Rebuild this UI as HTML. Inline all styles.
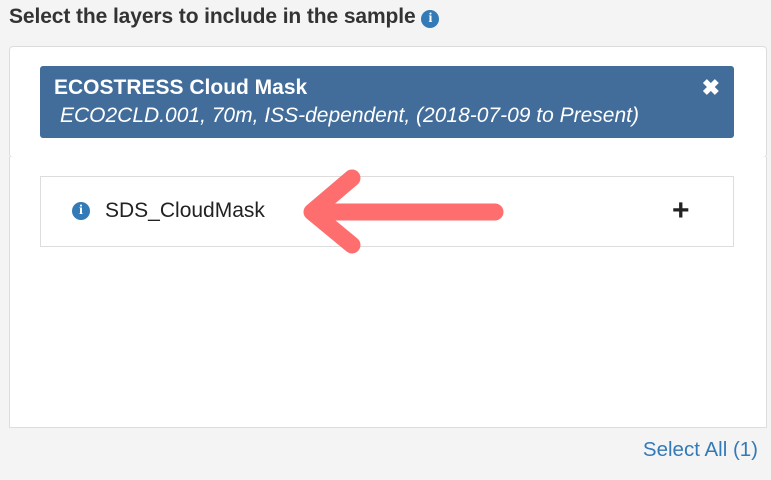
<!DOCTYPE html>
<html><head><style>
body{margin:0;width:771px;height:480px;background:#f4f4f4;font-family:"Liberation Sans",sans-serif;position:relative;overflow:hidden}
.t{position:absolute;left:9px;top:5px;font-size:21px;font-weight:bold;color:#333;white-space:nowrap;letter-spacing:-0.1px}
.p1{position:absolute;left:9px;top:46px;width:756px;height:110px;background:#fff;border:1px solid #ddd;border-radius:4px}
.blue{position:absolute;left:40px;top:66px;width:694px;height:72px;background:#426d9b;border-radius:3px;color:#fff}
.p2{position:absolute;left:9px;top:157px;width:756px;height:270px;background:#fff;border:1px solid #ddd;border-top:none}
.row{position:absolute;left:40px;top:176px;width:692px;height:69px;border:1px solid #ddd;background:#fff}
.info{display:inline-block;width:18px;height:18px;border-radius:50%;background:#337ab7;color:#fff;font-size:14px;font-weight:bold;text-align:center;line-height:18px;font-family:"Liberation Serif",serif}
</style></head><body>
<div class="t">Select the layers to include in the sample <span class="info" style="vertical-align:1px">i</span></div>
<div class="p1"></div>
<div class="blue">
<div style="position:absolute;left:14px;top:10px;font-size:21px;font-weight:bold;white-space:nowrap">ECOSTRESS Cloud Mask</div>
<div style="position:absolute;left:20px;top:38px;font-size:21px;font-style:italic;white-space:nowrap">ECO2CLD.001, 70m, ISS-dependent, (2018-07-09 to Present)</div>
<div style="position:absolute;right:14px;top:9px;font-size:22px;font-weight:bold">&#x2716;</div>
</div>
<div class="p2"></div>
<div class="row">
<span class="info" style="position:absolute;left:31px;top:25px">i</span>
<div style="position:absolute;left:64px;top:22px;font-size:21px;color:#222;white-space:nowrap">SDS_CloudMask</div>
<div style="position:absolute;left:631px;top:17px;font-size:30px;font-weight:bold;color:#222">+</div>
</div>
<svg style="position:absolute;left:0;top:0" width="771" height="480">
<g stroke="#ff6e6e" stroke-width="17" stroke-linecap="round" stroke-linejoin="round" fill="none">
<path d="M495 212 L312 212 M352 178 L312 212 L352 245"/>
</g></svg>
<div style="position:absolute;right:13px;top:438px;font-size:20.5px;color:#337ab7;white-space:nowrap">Select All (1)</div>
</body></html>
